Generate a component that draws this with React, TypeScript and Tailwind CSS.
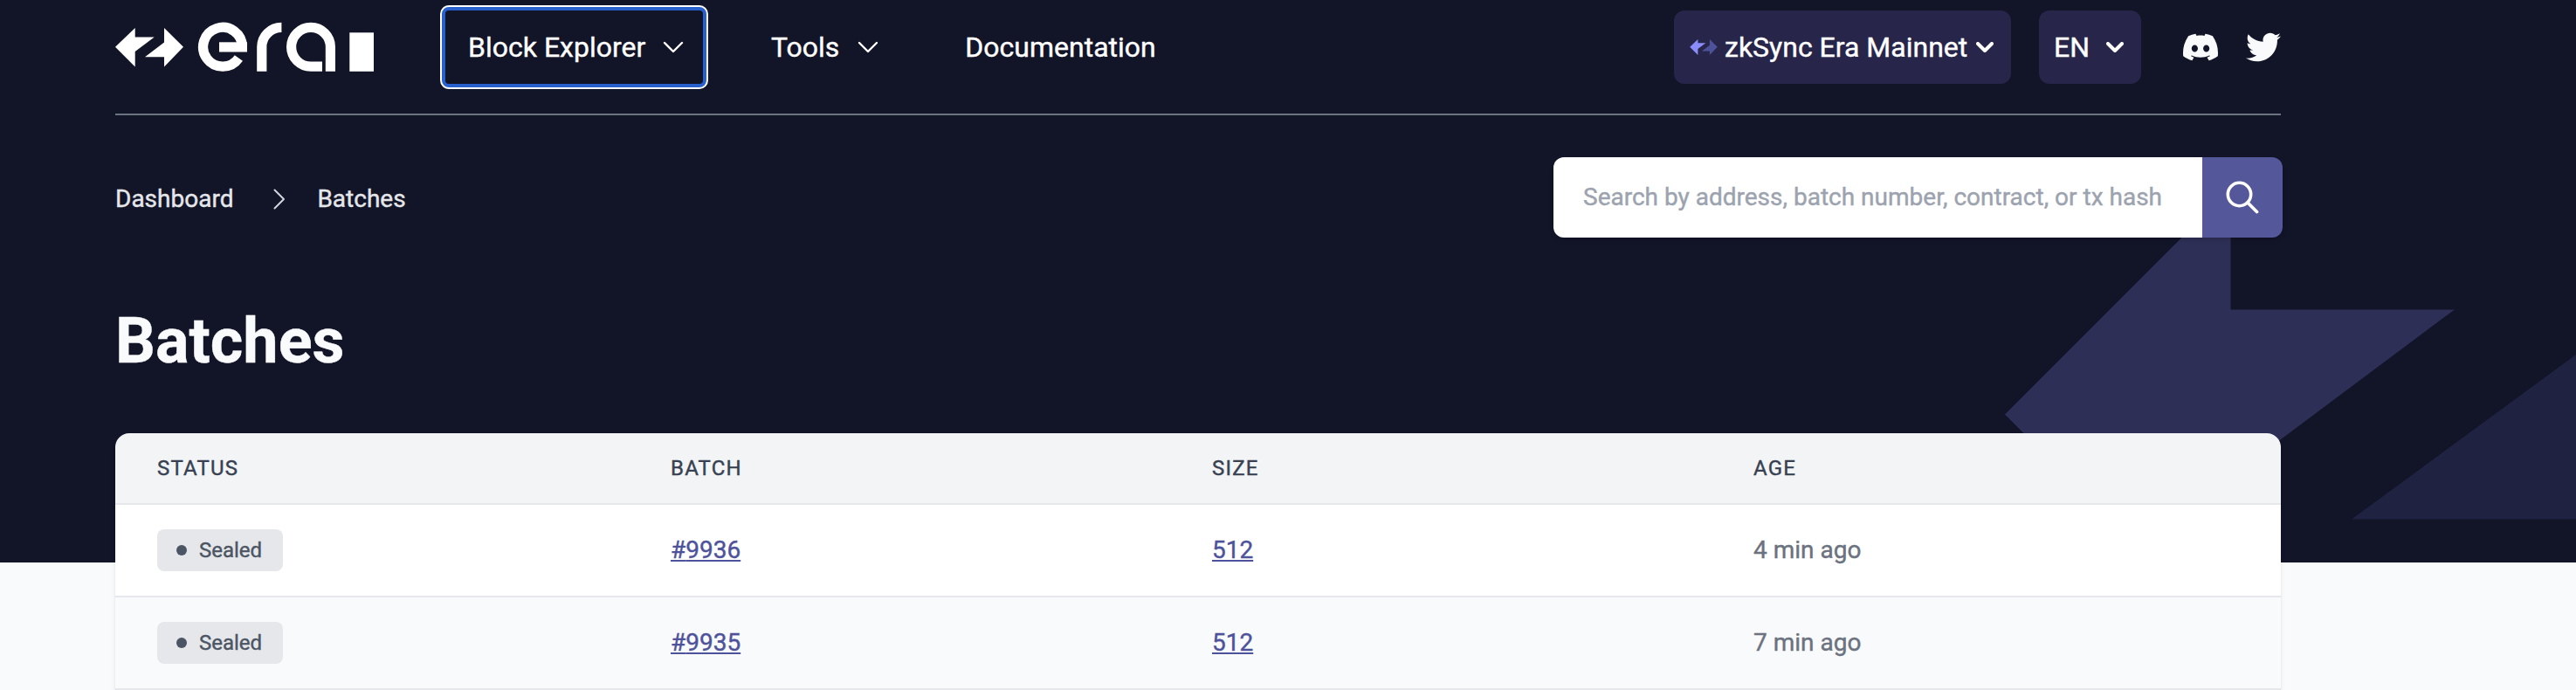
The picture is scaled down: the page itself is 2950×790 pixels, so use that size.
import React from "react";
import { FaTwitter } from "react-icons/fa";
import { SiDiscord } from "react-icons/si";

type Batch = { number: number; size: number; age: string };

const batches: Batch[] = [
  { number: 9936, size: 512, age: "4 min ago" },
  { number: 9935, size: 512, age: "7 min ago" },
];

function ThinChevron() {
  return (
    <svg width="24" height="14" viewBox="0 0 24 14" fill="none" className="shrink-0">
      <path d="M2 2 L12 12 L22 2" stroke="white" strokeWidth="2.4" strokeLinecap="round" strokeLinejoin="round" />
    </svg>
  );
}

function BoldChevron() {
  return (
    <svg width="20" height="12" viewBox="0 0 20 12" fill="none" className="shrink-0">
      <path d="M2 2 L10 10 L18 2" stroke="white" strokeWidth="4" strokeLinecap="round" strokeLinejoin="round" />
    </svg>
  );
}

function EraLogo() {
  return (
    <svg width="296" height="58" viewBox="132 25 296 58" fill="none" className="shrink-0">
      <path d="M132 53.8 L154.7 32 V42.5 H176.7 L154.7 59 V76.5 Z" fill="white" />
      <path d="M210 53.8 L188 32 V48.5 L166 65.3 H188 V76.5 Z" fill="white" />
      <g stroke="white" strokeWidth="11.2">
        <path d="M251 53.9 H283" />
        <path d="M277.4 53.8 A22.4 22.4 0 1 0 273.4 66.5" />
        <path d="M299.8 81.8 V53.8 A22.6 22.4 0 0 1 322.4 31.4" />
        <path d="M378.4 81.8 V53.8 A22.4 22.4 0 1 0 356 76.2 H369" />
      </g>
      <rect x="400.3" y="37.3" width="27.7" height="44.5" fill="white" />
    </svg>
  );
}

function NetworkIcon() {
  return (
    <svg width="32" height="18" viewBox="132 32 78 44.5" className="shrink-0">
      <path d="M132 53.8 L154.7 32 V42.5 H176.7 L154.7 59 V76.5 Z" fill="#8c8dfc" />
      <path d="M210 53.8 L188 32 V48.5 L166 65.3 H188 V76.5 Z" fill="#4e529a" />
    </svg>
  );
}

function Header() {
  return (
    <header className="mx-[132px] flex h-[132px] w-[2480px] items-start border-b-2 border-[#6b7280] text-[32px] leading-none text-white">
      <div className="flex h-[108px] items-center">
        <EraLogo />
        <button className="ml-[76px] flex h-24 w-[307px] items-center rounded-[10px] border-2 border-white bg-[#2860cd] p-1">
          <span className="flex h-full w-full items-center rounded-[4px] bg-[#121428] pl-[26px]">
            Block Explorer
            <span className="ml-5 flex">
              <ThinChevron />
            </span>
          </span>
        </button>
        <button className="ml-[72px] flex items-center">
          Tools
          <span className="ml-[21px] flex">
            <ThinChevron />
          </span>
        </button>
        <a className="ml-[99px]">Documentation</a>
      </div>
      <div className="ml-auto flex h-[108px] items-center">
        <button className="flex h-[84px] w-[386px] items-center rounded-xl bg-[#27264a] pl-[18px]">
          <NetworkIcon />
          <span className="ml-2">zkSync Era Mainnet</span>
          <span className="ml-[10px] flex">
            <BoldChevron />
          </span>
        </button>
        <button className="ml-8 flex h-[84px] w-[117px] items-center justify-between rounded-xl bg-[#27264a] pr-5 pl-[17px]">
          EN
          <BoldChevron />
        </button>
        <SiDiscord size={40} className="ml-12 text-[#f9fafb]" />
        <FaTwitter size={40} className="ml-8 text-[#f9fafb]" />
      </div>
    </header>
  );
}

function SearchBar() {
  return (
    <form className="-mr-0.5 flex h-[92px] w-[835px] overflow-hidden rounded-xl text-[28px] shadow-md">
      <div className="flex flex-1 items-center bg-white pl-[34px] leading-none whitespace-nowrap text-[#9ca3af]">
        Search by address, batch number, contract, or tx hash
      </div>
      <button type="button" className="flex w-[92px] items-center justify-center bg-[#54579a]">
        <svg width="38" height="38" viewBox="0 0 38 38" fill="none">
          <circle cx="15.5" cy="15.5" r="13.2" stroke="white" strokeWidth="3.6" />
          <path d="M25 25 L35.5 35.5" stroke="white" strokeWidth="3.8" strokeLinecap="round" />
        </svg>
      </button>
    </form>
  );
}

function Backdrop() {
  return (
    <svg width="700" height="644" viewBox="2250 0 700 644" className="absolute top-0 right-0">
      <path d="M2296 474.5 L2554.5 216 V354.4 H2811 L2554.5 546 V644 H2465 Z" fill="#2e2f56" />
      <path d="M2693 594.4 L2950 406 V594.4 Z" fill="#202241" />
    </svg>
  );
}

function BatchTable() {
  return (
    <section className="relative z-10 mx-[132px] -mt-[148px] w-[2480px] overflow-hidden rounded-t-2xl pb-10 shadow-md">
      <div className="grid h-[82px] grid-cols-4 items-center border-b-2 border-[#e5e7eb] bg-[#f3f4f6] text-2xl leading-none tracking-wider text-[#374151]">
        <div className="pl-12">STATUS</div>
        <div className="pl-4">BATCH</div>
        <div className="pl-4">SIZE</div>
        <div className="pl-4">AGE</div>
      </div>
      {batches.map((batch) => (
        <div
          key={batch.number}
          className="grid h-[106px] grid-cols-4 items-center border-b-2 border-[#e5e7eb] text-[28px] leading-none odd:bg-[#f9fafb] even:bg-white"
        >
          <div className="pl-12">
            <span className="flex h-12 w-36 items-center rounded-lg bg-[#e5e7eb] pl-[22px] text-2xl leading-none text-[#4b5563]">
              <span className="mr-[14px] h-3 w-3 rounded-full bg-[#4b5563]" />
              Sealed
            </span>
          </div>
          <div className="pl-4">
            <a className="text-[#4e529a] underline">#{batch.number}</a>
          </div>
          <div className="pl-4">
            <a className="text-[#4e529a] underline">{batch.size}</a>
          </div>
          <div className="pl-4 text-[#6b7280]">{batch.age}</div>
        </div>
      ))}
    </section>
  );
}

export default function App() {
  return (
    <div className="h-[790px] w-[2950px] overflow-hidden bg-[#f9fafb] font-[Roboto,sans-serif] [-webkit-text-stroke:0.4px]">
      <div className="relative h-[644px] bg-[#121428]">
        <Backdrop />
        <div className="relative">
          <Header />
          <div className="mx-[132px] mt-12 flex h-[92px] w-[2480px] items-center justify-between">
            <nav className="flex items-center pt-1 text-[28px] leading-none text-[#e5e7eb]">
              <span>Dashboard</span>
              <svg width="14" height="24" viewBox="0 0 14 24" fill="none" className="mr-[36px] ml-[46px]">
                <path d="M1.5 1.5 L12 12 L1.5 22.5" stroke="#d1d5db" strokeWidth="2" strokeLinecap="round" strokeLinejoin="round" />
              </svg>
              <span>Batches</span>
            </nav>
            <SearchBar />
          </div>
          <h1 className="mx-[132px] mt-[83px] text-[72px] leading-[72px] font-bold text-[#f9fafb]">Batches</h1>
        </div>
      </div>
      <BatchTable />
    </div>
  );
}
